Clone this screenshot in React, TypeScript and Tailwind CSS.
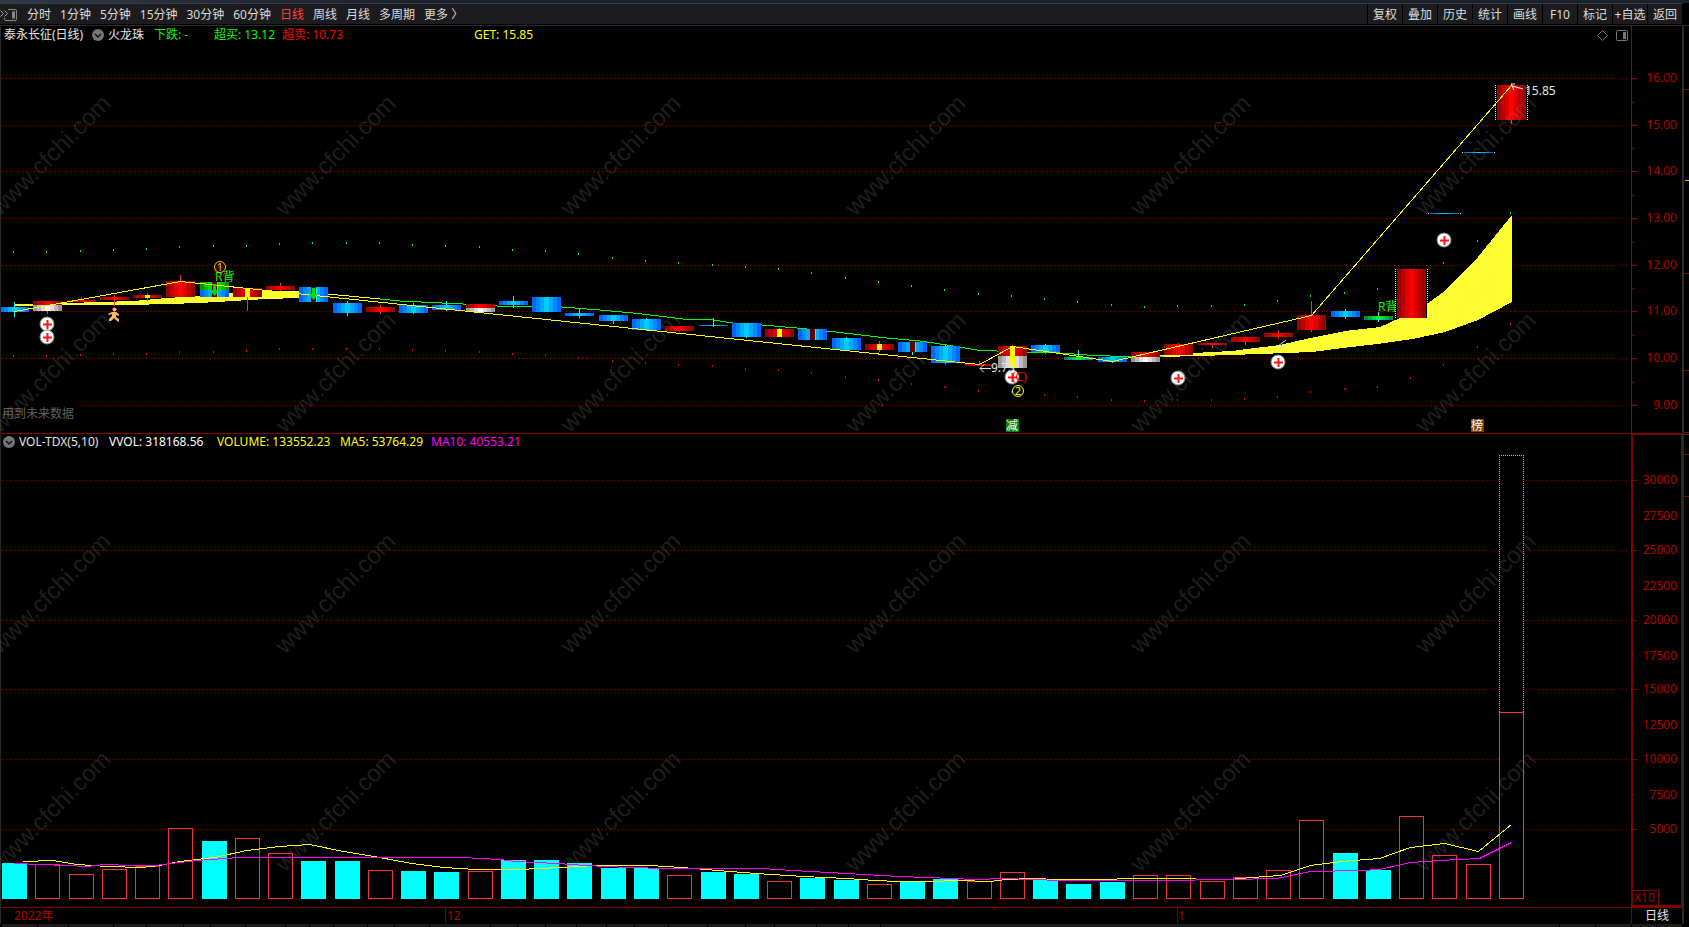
/**
 * Daily K-line screen: price panel on top, volume panel below,
 * each with its own scale on the right.
 */
import type { ReactNode } from "react";

type Tone = "red" | "blue" | "green" | "gray";

interface Candle {
  // stacked blocks: tone, top, bottom
  body: [Tone, number, number][];
  wick?: [number, number];
  core?: "yellow" | "dark";
}

const PERIODS = ["分时", "1分钟", "5分钟", "15分钟", "30分钟", "60分钟", "日线", "周线", "月线", "多周期", "更多 〉"];
const ACTIONS = ["复权", "叠加", "历史", "统计", "画线", "F10", "标记", "+自选", "返回"];

const FONT = '"Noto Sans", "Noto Sans CJK SC", sans-serif';

const SHADES: Record<Tone, string[]> = {
  red: ["#990000", "#bb0000", "#dd0000", "#ff0000"],
  blue: ["#0066ff", "#0088ff", "#00aaff", "#00ccff"],
  green: ["#009900", "#00bb00", "#00dd00", "#00ff00"],
  gray: ["#999999", "#bbbbbb", "#dddddd", "#ffffff"],
};

const CANDLES: Candle[] = [
  { body: [["blue", 307, 312]], wick: [302, 317] },
  { body: [["red", 301, 305], ["gray", 305, 311]], wick: [305, 314] },
  { body: [["red", 300, 302]], wick: [297, 302] },
  { body: [["red", 297, 300]], wick: [295, 306] },
  { body: [["red", 295, 298]], wick: [293, 301], core: "yellow" },
  { body: [["red", 281, 297]], wick: [275, 297] },
  { body: [["green", 282, 290], ["blue", 290, 297]], core: "dark" },
  { body: [["red", 288, 297]], wick: [288, 311], core: "yellow" },
  { body: [["red", 286, 290]], wick: [283, 292] },
  { body: [["blue", 287, 302]], core: "dark" },
  { body: [["blue", 303, 313]], wick: [301, 316] },
  { body: [["red", 307, 312]], wick: [305, 314] },
  { body: [["blue", 305, 313]], wick: [303, 314] },
  { body: [["blue", 305, 310]], wick: [301, 311] },
  { body: [["red", 304, 308], ["gray", 308, 312]] },
  { body: [["blue", 301, 305]], wick: [296, 308] },
  { body: [["blue", 297, 312]] },
  { body: [["blue", 313, 316]], wick: [309, 318] },
  { body: [["blue", 315, 321]], wick: [315, 324] },
  { body: [["blue", 319, 330]], wick: [318, 331] },
  { body: [["red", 326, 331]], wick: [326, 332] },
  { body: [["blue", 325, 326]], wick: [318, 327] },
  { body: [["blue", 323, 337]], wick: [323, 338] },
  { body: [["red", 329, 337]], wick: [328, 337], core: "yellow" },
  { body: [["blue", 329, 340]], core: "dark" },
  { body: [["blue", 338, 350]], wick: [337, 350] },
  { body: [["red", 344, 350]], wick: [341, 352], core: "yellow" },
  { body: [["blue", 342, 352]], wick: [342, 355], core: "dark" },
  { body: [["blue", 346, 363]], wick: [345, 364] },
  { body: [["red", 364, 366]], wick: [361, 366] },
  { body: [["red", 346, 356], ["gray", 356, 368]], wick: [345, 368], core: "yellow" },
  { body: [["blue", 345, 352]], wick: [344, 354] },
  { body: [["green", 357, 359], ["blue", 359, 360]], wick: [350, 360] },
  { body: [["blue", 357, 362]], wick: [357, 363] },
  { body: [["red", 352, 357], ["gray", 357, 362]] },
  { body: [["red", 344, 355]], wick: [343, 355] },
  { body: [["red", 343, 345]], wick: [343, 348] },
  { body: [["red", 337, 342]], wick: [337, 345] },
  { body: [["red", 333, 337]], wick: [330, 339] },
  { body: [["red", 315, 330]], wick: [301, 332] },
  { body: [["blue", 311, 317]], wick: [309, 319] },
  { body: [["green", 316, 319], ["blue", 319, 320]], wick: [312, 322] },
  { body: [["red", 269, 318]] },
  { body: [["blue", 213, 214]] },
  { body: [["blue", 152, 153]] },
  { body: [["red", 85, 120]], wick: [85, 124] },
];

const UPPER_DOTS = [
  251, 251, 250, 249, 248, 246, 245, 245, 243, 242, 242, 242, 244, 245, 246, 249, 250, 253, 257, 260, 262, 264, 266,
  268, 272, 277, 281, 285, 289, 293, 295, 298, 301, 304, 306, 305, 305, 304, 300, 295, 292, 288, 275, 262, 240, 212,
];
const LOWER_DOTS = [
  355, 355, 354, 353, 353, 351, 351, 350, 348, 348, 348, 348, 349, 350, 351, 353, 354, 357, 360, 362, 364, 365, 368,
  369, 372, 376, 379, 383, 386, 390, 391, 394, 396, 399, 400, 399, 399, 398, 396, 391, 388, 386, 377, 364, 346, 323,
];

// top of each volume bar, and whether that day closed down
const VOLUME: [number, boolean][] = [
  [863, true], [864, false], [874, false], [869, false], [866, false], [828, false], [841, true], [838, false],
  [853, false], [861, true], [861, true], [870, false], [871, true], [872, true], [871, false], [860, true],
  [860, true], [863, true], [868, true], [868, true], [875, false], [872, true], [874, true], [881, false],
  [878, true], [880, true], [884, false], [882, true], [879, true], [881, false], [872, false], [880, true],
  [884, true], [882, true], [875, false], [875, false], [881, false], [877, false], [870, false], [820, false],
  [853, true], [870, true], [816, false], [855, false], [864, false], [712, false],
];

const PRICE_TICKS: [number, string][] = [
  [78, "16.00"], [125, "15.00"], [171, "14.00"], [218, "13.00"],
  [265, "12.00"], [311, "11.00"], [358, "10.00"], [405, "9.00"],
];
const PRICE_MINOR = [102, 148, 195, 242, 288, 335, 382];
const VOLUME_TICKS: [number, string][] = [
  [480, "30000"], [550, "25000"], [620, "20000"], [689, "15000"], [759, "10000"], [829, "5000"],
];
const VOLUME_MINOR: [number, string][] = [
  [516, "27500"], [586, "22500"], [656, "17500"], [725, "12500"], [795, "7500"],
];

const ZIGZAG = "14,311 180,281 979,364 1012,346 1112,361 1311,315 1511,85";
const FAST_YELLOW = "297,291 328,294 380,299";
const FAST_GREEN =
  "380,299 400,301 463,304 497,306 532,306 562,307 600,310 633,313 667,317 683,319 713,320 733,323 762,325 797,328 827,331 887,338 920,341 947,345 977,350 997,351 1027,352 1060,353 1087,355 1110,356 1163,356";
const BAND_LEFT =
  "14,304 67,303 133,301 167,298 200,296 230,293 267,291 299,291 299,298 267,299 233,301 200,303 167,304 131,305 67,305 14,306";
const BAND_RIGHT =
  "1160,355 1193,353 1232,351 1247,349 1280,345 1310,338 1345,331 1380,327 1400,318 1428,303 1445,291 1478,257 1512,215 1512,302 1478,320 1445,332 1413,339 1377,344 1343,348 1312,352 1260,354 1200,356 1160,357";
const MA5 =
  "23,861 52,860 77,864 107,866 141,867 159,865 179,861 214,857 246,850 279,846 309,844 343,851 379,857 411,863 443,867 475,869 518,869 560,867 596,865 649,865 681,867 717,870 756,873 803,876 846,878 874,880 899,881 928,881 960,880 989,881 1006,879 1031,878 1060,879 1096,879 1138,878 1162,878 1229,879 1251,877 1280,875 1310,865 1341,861 1379,858 1410,847 1444,843 1478,851 1511,824";
const MA10 =
  "14,863 66,865 86,866 104,864 132,865 154,865 196,860 239,857 461,857 500,859 514,861 557,863 585,865 628,867 667,868 760,868 792,870 846,873 899,876 953,878 974,879 1006,878 1028,879 1064,880 1162,880 1229,879 1276,878 1310,871 1360,870 1379,869 1410,862 1439,860 1479,858 1511,842";

const PLUS_MARKS = [[47, 324], [47, 337], [1012, 377], [1178, 378], [1278, 362], [1444, 240]];

const STRIP_GAPS = [
  37, 68, 113, 146, 183, 210, 245, 285, 309, 333, 367, 394, 429, 490, 517, 545, 576, 606, 634, 668, 707, 745, 774, 816,
  848, 880, 1559, 1595, 1631, 1656,
];

const slotLeft = (i: number) => Math.max(0, Math.round(i * 33.265 - 0.02));

function CandleShape({ candle, index }: { candle: Candle; index: number }) {
  const x = slotLeft(index);
  const falling = candle.body.some(([tone]) => tone === "blue" || tone === "green");
  const top = candle.body[0][1];
  const bottom = candle.body[candle.body.length - 1][2];
  const wickColor = falling ? "#00ffff" : "#ff3232";
  return (
    <g>
      {candle.body.map(([tone, y1, y2]) => {
        const c = SHADES[tone];
        const h = y2 - y1;
        return (
          <g key={tone}>
            <rect x={x} y={y1} width={29} height={h} fill={c[0]} />
            <rect x={x + 4} y={y1} width={21} height={h} fill={c[1]} />
            <rect x={x + 8} y={y1} width={13} height={h} fill={c[2]} />
            <rect x={x + 12} y={y1} width={5} height={h} fill={c[3]} />
          </g>
        );
      })}
      {candle.wick && candle.wick[0] < top && (
        <rect x={x + 14} y={candle.wick[0]} width={1} height={top - candle.wick[0]} fill={wickColor} />
      )}
      {candle.wick && candle.wick[1] > bottom && (
        <rect x={x + 14} y={bottom} width={1} height={candle.wick[1] - bottom} fill={wickColor} />
      )}
      {candle.core && (
        <rect x={x + 12} y={top} width={5} height={bottom - top} fill={candle.core === "yellow" ? "#ffff00" : "#660000"} />
      )}
      {candle.core === "dark" && <rect x={x + 17} y={top} width={1} height={bottom - top} fill="#00ffff" />}
    </g>
  );
}

function GridLine({ y }: { y: number }) {
  return <path d={`M2 ${y}.5H1628`} stroke="#960000" strokeDasharray="1 3" />;
}

function PlusMark({ x, y }: { x: number; y: number }) {
  return (
    <g>
      <circle cx={x} cy={y} r={7} fill="#ffffff" stroke="#888888" strokeWidth={1} />
      <path d={`M${x - 4} ${y + 0.5}h9M${x + 0.5} ${y - 4}v9`} stroke="#ff1414" strokeWidth={2} />
    </g>
  );
}

function DownArrow({ x, y }: { x: number; y: number }) {
  return <path d={`M${x - 1} ${y}h3v6h3l-4.5 6l-4.5-6h3z`} fill="#00dd00" />;
}

function PriceChart() {
  return (
    <svg
      className="block h-[389px] w-full"
      viewBox="1 44 1630 389"
      preserveAspectRatio="none"
      fontFamily={FONT}
      fontSize={12}
      role="img"
      aria-label="日线"
    >
      <g shapeRendering="crispEdges" fill="none">
        {PRICE_TICKS.map(([y]) => (
          <GridLine key={y} y={y} />
        ))}
        <rect x={2} y={404} width={74} height={3} fill="#000000" />
        <polygon points={BAND_LEFT} fill="#ffff33" />
        <polygon points={BAND_RIGHT} fill="#ffff33" />
        <polyline points={FAST_GREEN} stroke="#00ff00" />
        <polyline points={FAST_YELLOW} stroke="#ffff33" />
        {UPPER_DOTS.map((y, i) => (
          <rect key={i} x={slotLeft(i) + 13} y={y} width={1} height={2} fill="#00ff00" />
        ))}
        {LOWER_DOTS.map((y, i) => (
          <rect key={i} x={slotLeft(i) + 13} y={y} width={1} height={2} fill="#ff0000" />
        ))}
      </g>

      <text x={215} y={281} fill="#00ff00">R背</text>
      <text x={1378} y={311} fill="#00ff00">R背</text>

      <g shapeRendering="crispEdges" fill="none">
        <rect x={1395} y={269} width={32} height={49} fill="#000000" />
        {CANDLES.map((candle, i) => (
          <CandleShape key={i} candle={candle} index={i} />
        ))}
        {/* limit-up days get dotted rails */}
        <path d="M1395.5 269v49M1427.5 269v49M1495.5 85v35M1527.5 85v35" stroke="#ffff33" strokeDasharray="1 1" />
        <path d="M1428 213.5h1M1460 213.5h1M1462 152.5h1M1494 152.5h1" stroke="#ffff33" />
        <polyline points={ZIGZAG} stroke="#ffff00" transform="translate(0.5 0.5)" />
      </g>

      <DownArrow x={214} y={284} />
      <DownArrow x={313} y={288} />

      {PLUS_MARKS.map(([x, y]) => (
        <PlusMark key={`${x}-${y}`} x={x} y={y} />
      ))}

      {/* runner */}
      <g fill="#ffbb66">
        <circle cx={114.5} cy={309.5} r={2} />
        <path d="M112 312h4l3 2v2l-3-1v2l3 2v3l-2-1l-3-3l-3 3h-2v-2l3-3v-2l-3 1l-1-1z" />
      </g>

      <circle cx={220} cy={272} r={5} fill="none" stroke="#cc2200" strokeDasharray="2 1" />
      <circle cx={220} cy={267} r={5.5} fill="none" stroke="#ffcc00" />
      <text x={220} y={271} textAnchor="middle" fontSize={11} fill="#ffcc00">1</text>

      <text x={1012} y={381} fill="#ff0000">(C)</text>
      <circle cx={1018} cy={391} r={5.5} fill="none" stroke="#ffff00" />
      <text x={1018} y={395} textAnchor="middle" fontSize={11} fill="#ffff00">2</text>

      <path d="M991 368.5h-11m4-4l-4 4l4 4" fill="none" stroke="#e6e6e6" />
      <text x={991} y={372} fill="#e6e6e6">9.73</text>

      <path d="M1523 89l-11-3m3-2h-4l3 6" fill="none" stroke="#ffffff" />
      <text x={1525} y={95} fill="#e6e6e6">15.85</text>

      <path d="M1286 340l-8 6h7" fill="none" stroke="#cfe4ff" />

      <rect x={1006} y={419} width={13} height={13} fill="#007f00" />
      <text x={1006} y={430} fill="#ffffff">减</text>
      <rect x={1471} y={419} width={13} height={13} fill="#7f3f00" />
      <text x={1471} y={430} fill="#ffffff">榜</text>

      <text x={2} y={418} fill="#606060">用到未来数据</text>
    </svg>
  );
}

function PriceScale() {
  return (
    <svg className="block h-[407px] w-[51px] shrink-0" viewBox="1631 26 51 407" fontFamily={FONT} fontSize={12}>
      <g shapeRendering="crispEdges" fill="#960000">
        <rect x={1631} y={26} width={1} height={407} />
        {PRICE_TICKS.map(([y]) => (
          <rect key={y} x={1632} y={y} width={5} height={1} />
        ))}
        {PRICE_MINOR.map((y) => (
          <rect key={y} x={1632} y={y} width={2} height={1} />
        ))}
      </g>
      {PRICE_TICKS.map(([y, label]) => (
        <text key={label} x={1677} y={y + 4} textAnchor="end" fill="#b40000">
          {label}
        </text>
      ))}
    </svg>
  );
}

function VolumeChart() {
  return (
    <svg
      className="block h-[457px] w-full"
      viewBox="1 450 1630 457"
      preserveAspectRatio="none"
      shapeRendering="crispEdges"
      fill="none"
      role="img"
      aria-label="VOL-TDX"
    >
      {VOLUME_TICKS.map(([y]) => (
        <GridLine key={y} y={y} />
      ))}
      <rect x={1500} y={456} width={23} height={443} fill="#000000" />
      <path d="M1499.5 712V455.5H1523.5V712" stroke="#cccc33" strokeDasharray="1 1" />
      {VOLUME.map(([top, down], i) => {
        const x = slotLeft(i) + 2;
        return down ? (
          <rect key={i} x={x} y={top} width={25} height={899 - top} fill="#00ffff" />
        ) : (
          <rect key={i} x={x + 0.5} y={top + 0.5} width={24} height={898 - top} fill="#000000" stroke="#ff3232" />
        );
      })}
      <polyline points={MA5} stroke="#ffff00" transform="translate(0.5 0.5)" />
      <polyline points={MA10} stroke="#ff00ff" transform="translate(0.5 0.5)" />
    </svg>
  );
}

function VolumeScale() {
  return (
    <svg className="block h-[473px] w-[51px] shrink-0" viewBox="1631 434 51 473" fontFamily={FONT} fontSize={12}>
      <g shapeRendering="crispEdges" fill="#820000">
        <path d="M1631 434h51v473h-51zM1633 435v470h48v-470z" fillRule="evenodd" />
        {VOLUME_TICKS.map(([y]) => (
          <rect key={y} x={1633} y={y} width={4} height={1} />
        ))}
        {VOLUME_MINOR.map(([y]) => (
          <rect key={y} x={1633} y={y - 1} width={1} height={1} />
        ))}
        <path d="M1633 890.5h25.5v15" fill="none" stroke="#820000" />
      </g>
      {[...VOLUME_TICKS, ...VOLUME_MINOR].map(([y, label]) => (
        <text key={label} x={1677} y={y + 4} textAnchor="end" fill="#b40000">
          {label}
        </text>
      ))}
      <text x={1634} y={902} fill="#b40000">X10</text>
    </svg>
  );
}

function Gutter() {
  return (
    <svg className="block h-[898px] w-[7px] shrink-0" viewBox="1682 26 7 898" shapeRendering="crispEdges">
      <rect x={1682} y={26} width={2} height={898} fill="#2a2a2a" />
      <g fill="#820000">
        {[89, 273, 370, 432, 454, 496].map((y) => (
          <rect key={y} x={1684} y={y} width={5} height={1} />
        ))}
      </g>
      <rect x={1682} y={434} width={7} height={1} fill="#333333" />
      <rect x={1685} y={180} width={4} height={1} fill="#e6a23c" />
    </svg>
  );
}

function Watermarks() {
  return (
    <svg
      className="pointer-events-none absolute inset-0 h-full w-full"
      fontFamily='"Liberation Sans", sans-serif'
      fontSize={24}
      fill="#8c8c8c"
      fillOpacity={0.22}
      aria-hidden="true"
    >
      {[217, 434, 655, 873].map((y) =>
        [0, 285, 570, 855, 1140, 1425].map((x) => (
          <text key={`${x}-${y}`} transform={`translate(${x} ${y}) rotate(-45)`}>
            www.cfchi.com
          </text>
        )),
      )}
    </svg>
  );
}

function Toggle({ label }: { label: string }) {
  return (
    <button type="button" aria-label={label} className="flex h-3 w-3 shrink-0 items-center justify-center rounded-full bg-[#777777]">
      <svg viewBox="0 0 12 12" className="h-3 w-3" fill="none" stroke="#111111" strokeWidth={1.5}>
        <path d="M3 5l3 3l3-3" />
      </svg>
    </button>
  );
}

function Reading({ className, children }: { className: string; children: ReactNode }) {
  return <span className={`shrink-0 whitespace-pre ${className}`}>{children}</span>;
}

function Toolbar() {
  return (
    <nav className="flex h-[23px] items-stretch border-b border-[#2a2a2a] bg-black pb-px">
      <div className="flex flex-1 items-center overflow-hidden border-t border-[#383c44] bg-[#1c1c1e] pt-0.5">
        <button type="button" aria-label="展开" className="mr-[10px] shrink-0">
          <svg viewBox="0 0 17 12" className="block h-3 w-[17px]" fill="none" stroke="#888888">
            <path d="M0.5 1.5l3 3l-3 3M4.5 1.5l3 3l-3 3" stroke="#aaaaaa" />
            <path d="M8 0.5h7a1.5 1.5 0 0 1 1.5 1.5v8a1.5 1.5 0 0 1-1.5 1.5h-9a1.5 1.5 0 0 1-1.5-1.5v-1" />
            <rect x={12} y={2.5} width={3} height={7} fill="#888888" stroke="none" />
          </svg>
        </button>
        <div className="flex gap-[9px]">
          {PERIODS.map((name) => (
            <button
              key={name}
              type="button"
              className={`shrink-0 whitespace-nowrap ${name === "日线" ? "text-[#ff3c3c]" : "text-[#dcdcdc]"}`}
            >
              {name}
            </button>
          ))}
        </div>
      </div>
      <div className="flex shrink-0 border-t border-r border-t-[#383c44] border-r-black bg-[#1c1c1e]">
        {ACTIONS.map((name) => (
          <button
            key={name}
            type="button"
            className="w-[35px] overflow-hidden border-l border-black pt-0.5 whitespace-nowrap text-[#dcdcdc]"
          >
            {name}
          </button>
        ))}
      </div>
      <div className="w-1.5 bg-black" />
    </nav>
  );
}

export default function App() {
  return (
    <div className="relative flex min-h-screen flex-col overflow-hidden bg-black font-['Noto_Sans','Noto_Sans_CJK_SC',sans-serif] text-[12px] leading-4">
      <div className="h-[3px] bg-linear-to-r from-[#2c3846] via-[#1a222c] via-25% to-[#1a222c]" />
      <Toolbar />

      <main className="flex">
        <div className="min-w-0 flex-1 border-l border-[#2a2a2a]">
          <section className="flex border-b border-[#820000]">
            <div className="min-w-0 flex-1">
              <header className="flex h-[18px] items-center pl-[3px] text-[#e6e6e6]">
                <Reading className="w-[88px]">泰永长征(日线)</Reading>
                <Toggle label="火龙珠" />
                <Reading className="ml-1 w-[46px]">火龙珠</Reading>
                <Reading className="w-[60px] text-[#00ff00]">下跌: -</Reading>
                <Reading className="w-[68px] text-[#00ff00]">超买: 13.12</Reading>
                <Reading className="w-[192px] text-[#ff0000]">超卖: 10.73</Reading>
                <Reading className="text-[#ffff00]">GET: 15.85</Reading>
                <div className="ml-auto flex items-center gap-2 pr-[3px]">
                  <svg viewBox="0 0 11 11" className="h-[11px] w-[11px]" fill="none" stroke="#777777">
                    <path d="M5.5 0.5l5 5l-5 5l-5-5z" />
                  </svg>
                  <svg viewBox="0 0 12 11" className="h-[11px] w-3" fill="none" stroke="#777777">
                    <rect x={0.5} y={0.5} width={11} height={10} rx={1} />
                    <rect x={7} y={2} width={3} height={7} fill="#777777" stroke="none" />
                  </svg>
                </div>
              </header>
              <PriceChart />
            </div>
            <PriceScale />
          </section>

          <section className="flex border-b border-[#820000]">
            <div className="min-w-0 flex-1">
              <header className="flex h-4 items-center pl-0.5 text-[#e6e6e6]">
                <Toggle label="VOL-TDX" />
                <Reading className="ml-1 w-[90px]">VOL-TDX(5,10)</Reading>
                <Reading className="w-[108px] text-white">VVOL: 318168.56</Reading>
                <Reading className="w-[123px] text-[#ffff00]">VOLUME: 133552.23</Reading>
                <Reading className="w-[91px] text-[#ffff00]">MA5: 53764.29</Reading>
                <Reading className="text-[#ff00ff]">MA10: 40553.21</Reading>
              </header>
              <VolumeChart />
            </div>
            <VolumeScale />
          </section>

          <footer className="flex h-4">
            <svg
              className="block h-4 min-w-0 flex-1"
              viewBox="1 908 1630 16"
              preserveAspectRatio="none"
              fontFamily={FONT}
              fontSize={12}
              fill="#b40000"
            >
              <path
                d="M445.5 908v15M1177.5 908v15M628.5 908v2M811.5 908v2M994.5 908v2"
                stroke="#820000"
                shapeRendering="crispEdges"
              />
              <text x={14} y={920}>2022年</text>
              <text x={447} y={920}>12</text>
              <text x={1178} y={920}>1</text>
            </svg>
            <button type="button" className="w-[51px] shrink-0 border-l border-[#820000] text-[#e6e6e6]">
              日线
            </button>
          </footer>
        </div>
        <Gutter />
      </main>

      <svg className="block h-[3px] w-full" viewBox="0 0 1689 3" preserveAspectRatio="none" shapeRendering="crispEdges">
        <rect x={2} width={1680} height={3} fill="#1c1c1e" />
        {STRIP_GAPS.map((x) => (
          <rect key={x} x={x} width={1} height={3} fill="#000000" />
        ))}
      </svg>

      <Watermarks />
    </div>
  );
}
